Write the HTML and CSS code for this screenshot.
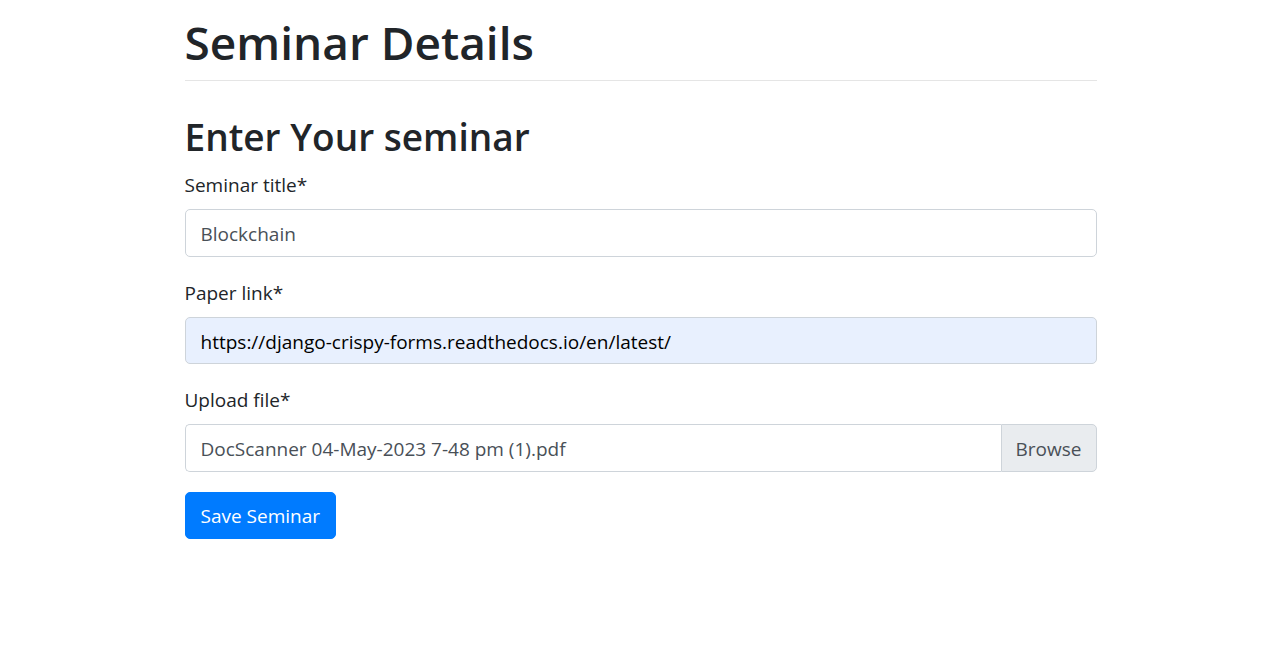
FILE: index.html
```html
<!DOCTYPE html>
<html lang="en">
<head>
<meta charset="utf-8">
<title>Seminar Details</title>
<link rel="stylesheet" href="styles.css">
</head>
<body>
<main class="container">
  <h1 class="page-title">Seminar Details</h1>
  <form class="seminar-form">
    <h2 class="form-title">Enter Your seminar</h2>
    <div class="form-group">
      <label for="title">Seminar title*</label>
      <input class="form-control" id="title" type="text" value="Blockchain">
    </div>
    <div class="form-group">
      <label for="link">Paper link*</label>
      <input class="form-control autofilled" id="link" type="text" value="https://django-crispy-forms.readthedocs.io/en/latest/">
    </div>
    <div class="form-group">
      <label for="file">Upload file*</label>
      <div class="file-group">
        <input class="form-control file-name" id="file" type="text" readonly value="DocScanner 04-May-2023 7-48 pm (1).pdf">
        <button class="browse" type="button">Browse</button>
      </div>
    </div>
    <button class="save" type="submit">Save Seminar</button>
  </form>
</main>
</body>
</html>
```
FILE: styles.css
```css
* { box-sizing: border-box; }
body {
  margin: 0;
  padding-left: 8px;
  background: #fff;
  color: #212529;
  font-family: "Segoe UI", "Open Sans", "Noto Sans", sans-serif;
  font-size: 19px;
  line-height: 29px;
}
input, button { font: inherit; }
.container {
  max-width: 912px;
  margin: 0 auto;
  padding-top: 12px;
}
.page-title {
  margin: 0 0 32px;
  padding-bottom: 8px;
  border-bottom: 1px solid #e5e5e5;
  font-size: 46px;
  line-height: 60px;
  font-weight: 600;
}
.form-title {
  margin: 0 0 8px;
  font-size: 37px;
  line-height: 48px;
  font-weight: 600;
}
.form-group { margin-bottom: 20px; }
label { display: block; padding-top: 2px; margin-bottom: 9px; }
.form-control {
  display: block;
  width: 100%;
  height: 48px;
  padding: 9px 15px 7px;
  border: 1px solid #ced4da;
  border-radius: 5px;
  background: #fff;
  color: #495057;
}
.autofilled { height: 47px; background: #e8f0fe; color: #000; }
.file-group { display: flex; }
.file-name { flex: 1; min-width: 0; border-right: 0; border-radius: 5px 0 0 5px; }
.browse {
  padding: 9px 14px 7px;
  border: 1px solid #ced4da;
  border-radius: 0 5px 5px 0;
  background: #e9ecef;
  color: #495057;
}
.save {
  padding: 9px 15px 7px;
  border: 1px solid #007bff;
  border-radius: 5px;
  background: #007bff;
  color: #fff;
}
```
